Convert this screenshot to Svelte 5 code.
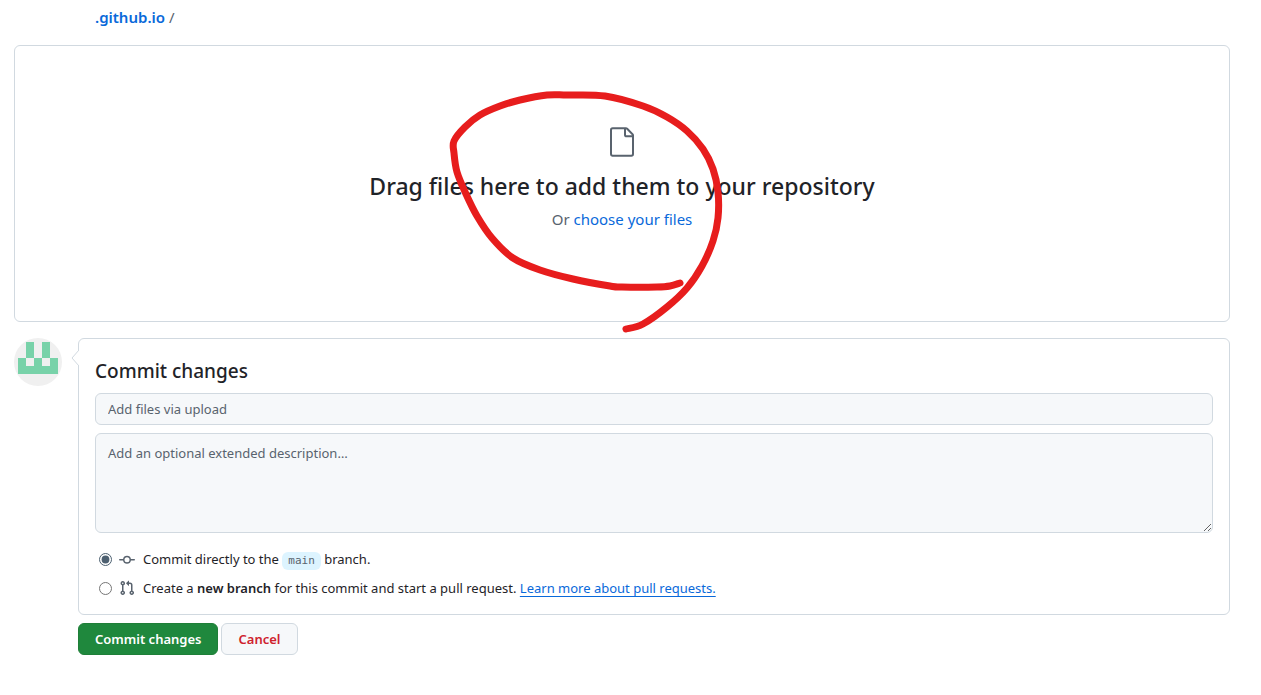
<script>
  let summary = $state('')
  let description = $state('')
  let target = $state('direct')

  // Filled cells of the identicon, on a 5x5 grid
  const identicon = ['.#.#.', '.#.#.', '#.#.#', '#####', '.....']
  const cells = identicon.flatMap((row, y) =>
    [...row].map((cell, x) => ({ x, y, filled: cell === '#' })).filter(c => c.filled)
  )

  // Pen stroke, from its inner end round to its tail
  const stroke = [
    [238, 197], [228, 200], [215, 201], [180, 201], [168, 200], [131, 193], [98, 184],
    [71, 172], [50, 152], [35, 130], [24, 108], [15, 86], [12, 67], [12, 55], [23, 41],
    [38, 29], [58, 20], [78, 14], [105, 9], [125, 9], [163, 10], [201, 20], [225, 31],
    [245, 45], [261, 63], [271, 83], [276, 106], [276, 132], [271, 155], [260, 180],
    [245, 202], [225, 221], [201, 238], [184, 243]
  ]

  // Joins the points with a Catmull-Rom curve
  function smooth(points) {
    let d = `M${points[0]}`
    for (let i = 0; i < points.length - 1; i++) {
      const p0 = points[i - 1] ?? points[i]
      const p1 = points[i]
      const p2 = points[i + 1]
      const p3 = points[i + 2] ?? p2
      const c1 = [p1[0] + (p2[0] - p0[0]) / 6, p1[1] + (p2[1] - p0[1]) / 6]
      const c2 = [p2[0] - (p3[0] - p1[0]) / 6, p2[1] - (p3[1] - p1[1]) / 6]
      d += ` C${c1} ${c2} ${p2}`
    }
    return d
  }

  function reset() {
    summary = ''
    description = ''
    target = 'direct'
  }
</script>

<main class="page">
  <nav class="breadcrumb" aria-label="Breadcrumb">
    <a href="#repo">.github.io</a> <span class="separator">/</span>
  </nav>

  <section class="dropzone">
    <svg class="file-icon" viewBox="0 0 24 24" aria-hidden="true">
      <path d="M3 3a2 2 0 0 1 2-2h9.982a2 2 0 0 1 1.414.586l4.018 4.018A2 2 0 0 1 21 7.018V21a2 2 0 0 1-2 2H4.750a1.750 1.750 0 0 1-1.750-1.750Zm2-.5a.5.5 0 0 0-.5.5v18a.5.5 0 0 0 .5.5h14a.5.5 0 0 0 .5-.5V8.500h-4a2 2 0 0 1-2-2v-4Zm10 0v4a.5.5 0 0 0 .5.5h4a.5.5 0 0 0-.146-.336l-4.018-4.018A.5.5 0 0 0 15 2.500Z" />
    </svg>
    <h1>Drag files here to add them to your repository</h1>
    <p class="choose">Or <a href="#choose">choose your files</a></p>

    <svg class="marker" viewBox="0 0 360 250" aria-hidden="true">
      <path d={smooth(stroke)} />
    </svg>
  </section>

  <form class="commit" onsubmit={e => e.preventDefault()}>
    <svg class="avatar" viewBox="0 0 48 48" role="img" aria-label="Avatar">
      <circle cx="24" cy="24" r="24" fill="#f0f0f0" />
      {#each cells as cell}
        <rect x={4 + cell.x * 8} y={4 + cell.y * 8} width="8" height="8" fill="#78d2a9" shape-rendering="crispEdges" />
      {/each}
    </svg>

    <div class="commit-main">
      <div class="card">
        <svg class="caret" viewBox="0 0 8 16" aria-hidden="true">
          <path d="M8 0 L1 8 L8 16" />
        </svg>
        <h2>Commit changes</h2>
        <input
          class="field"
          type="text"
          aria-label="Commit message"
          placeholder="Add files via upload"
          bind:value={summary}
        />
        <textarea
          class="field description"
          aria-label="Extended description"
          placeholder="Add an optional extended description…"
          bind:value={description}
        ></textarea>

        <div class="choices">
          <div class="choice">
            <input id="direct" type="radio" name="target" value="direct" bind:group={target} />
            <svg class="icon" viewBox="0 0 16 16" aria-hidden="true">
              <path d="M11.930 8.500a4.002 4.002 0 0 1-7.860 0H.750a.750.750 0 0 1 0-1.500h3.320a4.002 4.002 0 0 1 7.860 0h3.320a.750.750 0 0 1 0 1.500Zm-1.430-.750a2.500 2.500 0 1 0-5 0 2.500 2.500 0 0 0 5 0Z" />
            </svg>
            <label for="direct">Commit directly to the <code>main</code> branch.</label>
          </div>
          <div class="choice">
            <input id="branch" type="radio" name="target" value="branch" bind:group={target} />
            <svg class="icon" viewBox="0 0 16 16" aria-hidden="true">
              <path d="M1.500 3.250a2.250 2.250 0 1 1 3 2.122v5.256a2.251 2.251 0 1 1-1.500 0V5.372A2.250 2.250 0 0 1 1.500 3.250Zm5.677-.177L9.573.677A.250.250 0 0 1 10 .854V2.500h1A2.500 2.500 0 0 1 13.500 5v5.628a2.251 2.251 0 1 1-1.500 0V5a1 1 0 0 0-1-1h-1v1.646a.250.250 0 0 1-.427.177L7.177 3.427a.250.250 0 0 1 0-.354ZM3.750 2.500a.750.750 0 1 0 0 1.500.750.750 0 0 0 0-1.500Zm0 9.500a.750.750 0 1 0 0 1.500.750.750 0 0 0 0-1.500Zm8.250.750a.750.750 0 1 0 1.500 0 .750.750 0 0 0-1.500 0Z" />
            </svg>
            <span>
              <label for="branch">Create a <b>new branch</b> for this commit and start a pull request.</label>
              <a class="learn" href="#pulls">Learn more about pull requests.</a>
            </span>
          </div>
        </div>
      </div>

      <div class="actions">
        <button class="primary" type="submit">Commit changes</button>
        <button class="danger" type="button" onclick={reset}>Cancel</button>
      </div>
    </div>
  </form>
</main>

<style>
  :global(body) {
    margin: 0;
    background: #fff;
  }

  .page {
    padding: 5px 31px 40px 14px;
    font-family: "Segoe UI", "Noto Sans", "Open Sans", sans-serif;
    font-size: 13px;
    line-height: 20px;
    color: #1f2328;
  }

  .page * {
    box-sizing: border-box;
  }

  a {
    color: #0969da;
    text-decoration: none;
  }

  .breadcrumb {
    padding-left: 81px;
    margin-bottom: 16px;
    font-size: 15px;
    line-height: 24px;
  }

  .breadcrumb a {
    font-weight: 600;
  }

  .separator {
    color: #59636e;
  }

  .dropzone {
    position: relative;
    display: flex;
    flex-direction: column;
    align-items: center;
    padding: 80px 16px;
    border: 1px solid #d1d9e0;
    border-radius: 6px;
    text-align: center;
  }

  .file-icon {
    width: 32px;
    height: 32px;
    fill: #59636e;
  }

  h1 {
    margin: 10px 0 0;
    font-size: 23px;
    line-height: 36px;
    font-weight: 500;
  }

  .choose {
    margin: 3px 0 0;
    padding-bottom: 10px;
    font-size: 15px;
    line-height: 24px;
    color: #59636e;
  }

  /* Hand-drawn loop over the drop area */
  .marker {
    position: absolute;
    top: 40px;
    left: 50%;
    width: 360px;
    height: 250px;
    margin-left: -180px;
    fill: none;
    stroke: #e71d1d;
    stroke-width: 7px;
    stroke-linecap: round;
    stroke-linejoin: round;
    pointer-events: none;
  }

  .commit {
    display: flex;
    align-items: flex-start;
    gap: 16px;
    margin-top: 16px;
  }

  .avatar {
    flex: none;
    width: 48px;
    height: 48px;
  }

  .commit-main {
    flex: 1;
    min-width: 0;
  }

  .card {
    position: relative;
    padding: 16px;
    border: 1px solid #d1d9e0;
    border-radius: 6px;
  }

  .caret {
    position: absolute;
    top: 11px;
    left: -8px;
    width: 8px;
    height: 16px;
    fill: #fff;
    stroke: #d1d9e0;
  }

  h2 {
    margin: 0 0 6px;
    font-size: 19px;
    line-height: 32px;
    font-weight: 500;
  }

  .field {
    display: block;
    width: 100%;
    height: 32px;
    padding: 5px 12px;
    border: 1px solid #d1d9e0;
    border-radius: 6px;
    background: #f6f8fa;
    color: #1f2328;
    font: inherit;
  }

  .field::placeholder {
    color: #59636e;
    opacity: 1;
  }

  .field:focus {
    outline: 2px solid #0969da;
    outline-offset: -1px;
  }

  .description {
    height: 100px;
    margin-top: 8px;
    padding-top: 9px;
    resize: vertical;
  }

  .choices {
    display: grid;
    gap: 8px;
    padding: 16px 0 0 4px;
  }

  .choice {
    display: flex;
    align-items: center;
  }

  .choice input {
    width: 13px;
    height: 13px;
    margin: 0 7px 0 0;
    accent-color: #4d6070;
  }

  .icon {
    flex: none;
    width: 16px;
    height: 16px;
    margin-right: 8px;
    fill: #59636e;
  }

  b {
    font-weight: 600;
  }

  code {
    display: inline-block;
    padding: 0 6px;
    border-radius: 6px;
    background: #ddf4ff;
    color: #59636e;
    font-family: "DejaVu Sans Mono", monospace;
    font-size: 11px;
    line-height: 18px;
  }

  .learn {
    text-decoration: underline;
    text-underline-offset: 3px;
  }

  .actions {
    display: flex;
    gap: 3px;
    margin-top: 8px;
  }

  button {
    height: 32px;
    padding: 0 16px;
    border: 1px solid #d1d9e0;
    border-radius: 6px;
    font: inherit;
    font-weight: 600;
    cursor: pointer;
  }

  .primary {
    border-color: #1f7f38;
    background: #1f883d;
    color: #fff;
  }

  .danger {
    background: #f6f8fa;
    color: #cf222e;
  }
</style>
